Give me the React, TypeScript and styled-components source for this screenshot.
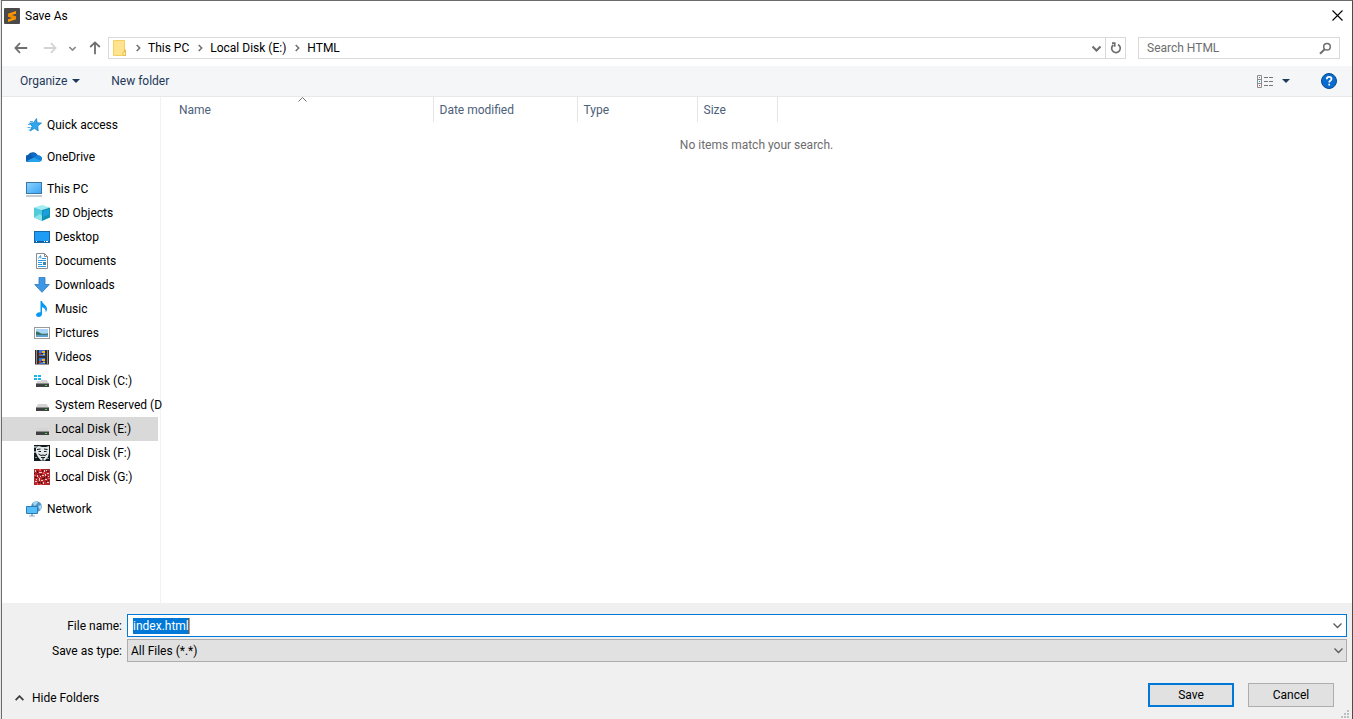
import React, { useEffect, useRef, useState } from "react";
import styled, { createGlobalStyle, css } from "styled-components";

const GlobalStyle = createGlobalStyle`
  *, *::before, *::after { box-sizing: border-box; }
  html, body, #root { height: 100%; }
  body {
    margin: 0;
    background: #e4e6ea;
    color: #000;
    font-family: Roboto, "Segoe UI", "Open Sans", sans-serif;
    font-size: 12px;
    line-height: 16px;
  }
  button, input, select { font: inherit; color: inherit; margin: 0; }
  svg { display: block; flex: none; }
`;

/* ---------- window ---------- */

const Window = styled.div`
  display: flex;
  flex-direction: column;
  min-height: 100%;
  margin-left: 1px;
  background: #fff;
  border: 1px solid #6b6b6b;
  border-right-color: #4c4c4c;
  border-bottom: 0;
`;

const TitleBar = styled.header`
  display: flex;
  align-items: center;
  height: 29px;
  padding: 0 2px;
`;

const Title = styled.h1`
  flex: 1;
  margin: 0 0 0 5px;
  font-size: 12px;
  font-weight: 400;
`;

const IconButton = styled.button<{ $width?: number }>`
  display: flex;
  align-items: center;
  justify-content: center;
  width: ${(p) => p.$width ?? 20}px;
  height: 20px;
  padding: 0;
  border: 0;
  background: transparent;
`;

/* ---------- navigation row ---------- */

const NavRow = styled.nav`
  display: flex;
  align-items: center;
  height: 36px;
  padding: 0 12px 0 9px;
`;

const NavButtons = styled.div`
  display: flex;
  align-items: center;
  justify-content: space-between;
  width: 97px;
  padding-right: 3px;
`;

const AddressBar = styled.div`
  display: flex;
  align-items: center;
  flex: 1;
  height: 22px;
  border: 1px solid #d9d9d9;
`;

const Crumbs = styled.ol`
  display: flex;
  align-items: center;
  flex: 1;
  margin: 0;
  padding: 0 0 0 3px;
  list-style: none;
`;

const Crumb = styled.li`
  display: flex;
  align-items: center;
`;

const CrumbLink = styled.a`
  padding: 0 1px 0 0;
  color: #000;
  text-decoration: none;
`;

const CrumbArrow = styled.span`
  display: flex;
  justify-content: center;
  width: 20px;
`;

const RefreshCell = styled.div`
  display: flex;
  align-items: center;
  align-self: stretch;
  border-left: 1px solid #d9d9d9;
`;

const SearchBox = styled.label`
  display: flex;
  align-items: center;
  width: 202px;
  height: 22px;
  margin-left: 12px;
  padding: 0 7px 0 8px;
  border: 1px solid #d9d9d9;
`;

const SearchInput = styled.input`
  flex: 1;
  min-width: 0;
  padding: 0;
  border: 0;
  outline: 0;
  background: transparent;
  &::placeholder { color: #6d6d6d; opacity: 1; }
`;

/* ---------- toolbar ---------- */

const Toolbar = styled.div`
  display: flex;
  align-items: center;
  height: 31px;
  padding: 0 14px 0 18px;
  background: #f5f6f7;
  border-bottom: 1px solid #e8e8e9;
`;

const ToolbarButton = styled.button`
  display: flex;
  align-items: center;
  gap: 5px;
  height: 20px;
  padding: 0;
  margin-right: 31px;
  border: 0;
  background: transparent;
  color: #1e395b;
`;

const Spacer = styled.div`
  flex: 1;
`;

const ToolbarEnd = styled.div`
  display: flex;
  align-items: center;
`;

const HelpSlot = styled.div`
  margin-left: 23px;
`;

/* ---------- body ---------- */

const Body = styled.div`
  display: flex;
  flex: 1;
`;

const Sidebar = styled.aside`
  flex: none;
  width: 159px;
  padding: 16px 2px 16px 0;
  border-right: 1px solid #f2f2f2;
`;

const Tree = styled.ul`
  display: flex;
  flex-direction: column;
  gap: 8px;
  margin: 0;
  padding: 0;
  list-style: none;
`;

const Branch = styled.ul`
  margin: 0;
  padding: 0;
  list-style: none;
`;

const TreeItem = styled.a<{ $nested?: boolean; $selected?: boolean }>`
  display: flex;
  align-items: center;
  gap: 5px;
  height: 24px;
  padding-left: ${(p) => (p.$nested ? 32 : 24)}px;
  white-space: nowrap;
  color: #000;
  text-decoration: none;
  ${(p) => p.$selected && css`background: #d9d9d9;`}
`;

const FileArea = styled.main`
  flex: 1;
  min-width: 0;
`;

const FileTable = styled.table`
  width: 100%;
  table-layout: fixed;
  border-collapse: collapse;
`;

const HeadCell = styled.th<{ $width?: number; $inset?: number }>`
  position: relative;
  width: ${(p) => (p.$width ? `${p.$width}px` : "auto")};
  height: 25px;
  padding: 0 0 0 ${(p) => p.$inset ?? 6}px;
  border-right: ${(p) => (p.$width ? "1px solid #e5e5e5" : "0")};
  color: #4c607a;
  font-weight: 400;
  text-align: left;
`;

const SortMark = styled.span`
  position: absolute;
  top: 0;
  left: 12px;
  right: 0;
  display: flex;
  justify-content: center;
`;

const EmptyCell = styled.td`
  height: 46px;
  padding: 0;
  color: #6d6d6d;
  text-align: center;
`;

/* ---------- footer ---------- */

const Footer = styled.form`
  display: flex;
  flex-direction: column;
  gap: 2px;
  position: relative;
  padding: 11px 5px 12px 0;
  background: #f0f0f0;
`;

const Field = styled.div`
  display: grid;
  grid-template-columns: 120px 1fr;
  column-gap: 5px;
  align-items: center;
`;

const FieldLabel = styled.label`
  text-align: right;
`;

const NameBox = styled.div`
  display: flex;
  align-items: center;
  justify-content: space-between;
  height: 23px;
  padding-left: 5px;
  border: 1px solid #0078d7;
  background: #fff;
`;

const NameInput = styled.input`
  field-sizing: content;
  height: 16px;
  padding: 0;
  border: 0;
  border-right: 1px solid #ff8728;
  outline: 0;
  background: transparent;
  &::selection { background: #0078d7; color: #fff; }
`;

const SelectWrap = styled.div`
  position: relative;
`;

const TypeSelect = styled.select`
  display: block;
  width: 100%;
  height: 23px;
  padding: 0 20px 0 3px;
  border: 1px solid #adadad;
  border-radius: 0;
  appearance: none;
  background: #e1e1e1;
`;

const SelectArrow = styled.span`
  position: absolute;
  top: 0;
  right: 0;
  bottom: 0;
  display: flex;
  align-items: center;
  justify-content: center;
  width: 18px;
  pointer-events: none;
`;

const Actions = styled.div`
  display: flex;
  align-items: center;
  gap: 14px;
  padding: 19px 13px 0;
`;

const HideFolders = styled.button`
  display: flex;
  align-items: center;
  align-self: flex-end;
  gap: 8px;
  padding: 0 0 1px;
  margin-right: auto;
  border: 0;
  background: transparent;
`;

const PushButton = styled.button<{ $primary?: boolean }>`
  width: 86px;
  height: 24px;
  padding: 0;
  border: ${(p) => (p.$primary ? "2px solid #0078d7" : "1px solid #adadad")};
  background: #e1e1e1;
`;

const Grip = styled.span`
  position: absolute;
  right: 3px;
  bottom: 1px;
`;

/* ---------- small glyphs ---------- */

const ChevronDown = ({ size = 9, color = "#5a5a5a", width = 1.3 }) => (
  <svg width={size} height={size} viewBox="0 0 9 9" fill="none" stroke={color} strokeWidth={width}>
    <path d="M.5 2.5l4 4 4-4" />
  </svg>
);

const Triangle = () => (
  <svg width="8" height="4" viewBox="0 0 8 4"><path d="M0 0h8L4 4z" fill="#1e395b" /></svg>
);

const CrumbChevron = () => (
  <svg width="5" height="8" viewBox="0 0 5 8" fill="none" stroke="#6e6e6e" strokeWidth="1.5">
    <path d="M.7 1l3 3-3 3" />
  </svg>
);

const Arrow = ({ color, turn = 0 }: { color: string; turn?: number }) => (
  <svg width="14" height="14" viewBox="0 0 14 14" fill="none" stroke={color} strokeWidth="1.8">
    <path d="M6 2.2L1.4 7 6 11.8M1.6 7h11.6" transform={`rotate(${turn} 7 7)`} />
  </svg>
);

const AppIcon = () => (
  <svg width="16" height="16" viewBox="0 0 16 16">
    <rect width="16" height="16" rx="1" fill="#4a4a4a" />
    <path d="M12 3v2.7L7.4 7.1 12 8.6v2.7L4 14v-2.7l4.4-1.4L4 8.4V5.7z" fill="#ff9800" />
    <path d="M4 5.700l8 2.900v2.700L4 8.400z" fill="#f08c00" />
  </svg>
);

const FolderIcon = () => (
  <svg width="16" height="16" viewBox="0 0 16 16">
    <path d="M1.500.5h11v9l1 .5v5.500h-12z" fill="#ffe38f" stroke="#f3cf62" />
    <path d="M12.500 9.500l1 .5v5.500h-2.500v-3l1.500-.5z" fill="#fff0b8" stroke="#e8bf4a" />
  </svg>
);

const StarIcon = () => (
  <svg width="16" height="16" viewBox="0 0 16 16">
    <path d="M10.500 1.500l.7 4.300 4.300.2-3.700 3 .4 5-3.700-2.600-4.500 2.600 2.100-4.700L3.500 6l4-.2z" fill="#2ea7ef" stroke="#1580c6" strokeWidth=".7" />
    <path d="M4 4.500h3M2 7.500h3M1.500 10.500h3M2.500 13h2" stroke="#4fb0ea" strokeWidth="1" />
  </svg>
);

const CloudIcon = () => (
  <svg width="16" height="16" viewBox="1 0 15 16" preserveAspectRatio="none">
    <path d="M3.500 13A3.500 3.500 0 0 1 2.800 6 5 5 0 0 1 12 6.500a3 3 0 0 1 3.500 3c0 2-1.500 3-3 3z" fill="#0a5cb0" />
    <path d="M5 5.500A4.600 4.600 0 0 1 12 6.300L8.500 8.800z" fill="#0f6cc8" />
    <path d="M1.800 12l6.500-3.400L12 6.800a3 3 0 0 1 4 2.900 3 3 0 0 1-3 3.300H4z" fill="#28a3ea" />
    <path d="M8.300 8.600L12 6.800a3 3 0 0 1 4 2.900c0 1-.4 1.800-1 2.400z" fill="#1484dc" />
  </svg>
);

const PcIcon = () => (
  <svg width="16" height="16" viewBox="0 0 16 16">
    <defs>
      <linearGradient id="pc" x1="0" y1="0" x2="1" y2="1">
        <stop offset="0" stopColor="#8fd3ff" /><stop offset="1" stopColor="#37a5f4" />
      </linearGradient>
    </defs>
    <rect x=".5" y="1.500" width="15" height="11" fill="url(#pc)" stroke="#3778a8" />
    <path d="M0 15h16" stroke="#8796a6" strokeWidth="1" />
  </svg>
);

const CubeIcon = () => (
  <svg width="16" height="16" viewBox="0 0 16 16">
    <path d="M0 2.500L8 0l8 2.500L8 5z" fill="#a3ecf2" />
    <path d="M0 2.500L8 5v11l-8-3.500z" fill="#4fcbdc" />
    <path d="M16 2.500L8 5v11l8-3.500z" fill="#0f93b0" />
    <path d="M9 6l6-1.800v5.300L9 12z" fill="#1c9fe0" />
    <path d="M0 12.500L6 9l2 2v5z" fill="#8ee3ea" />
  </svg>
);

const DesktopIcon = () => (
  <svg width="16" height="16" viewBox="0 0 16 16">
    <rect x=".5" y="2.500" width="15" height="11" fill="#1f9cf5" stroke="#1569a8" />
    <path d="M1 12.500h14" stroke="#0b5c9e" />
    <path d="M2 12.500h1M10 12.500h1M12 12.500h2" stroke="#fff" />
  </svg>
);

const DocumentIcon = () => (
  <svg width="16" height="16" viewBox="0 0 16 16">
    <path d="M2.500.5h8l3 3v12h-11z" fill="#fff" stroke="#8b8b8b" />
    <path d="M10.500.5v3h3" fill="none" stroke="#8b8b8b" />
    <path d="M4.500 5.500L6.500 2.500l.5 3M8 5.500h4M4 7.500h8M4 9.500h4M4 11.500h4M4 13.500h8" fill="none" stroke="#2c9be0" />
    <path d="M9 9h3v3H9z" fill="#3b87a8" />
  </svg>
);

const DownloadIcon = () => (
  <svg width="16" height="16" viewBox="0 0 16 16">
    <path d="M5 .5h6v7h4.300L8 15.300.7 7.500H5z" fill="#3e97e4" stroke="#2b78bd" strokeWidth=".8" />
  </svg>
);

const MusicIcon = () => (
  <svg width="16" height="16" viewBox="0 0 16 16">
    <path d="M6.500 0H8c.3 3 5 4 5 8 0 1.300-.6 2.600-1.300 3.300C12 8 10 6.800 8 6.300V13c0 1.800-1.500 3-3.300 3C3 16 2 15 2.100 13.700c.2-1.700 2.300-2.900 4.400-2.400z" fill="#0a99f2" />
  </svg>
);

const PictureIcon = () => (
  <svg width="16" height="16" viewBox="0 0 16 16">
    <rect x=".5" y="2.500" width="15" height="11" fill="#fff" stroke="#9a9a9a" />
    <path d="M2 4h12v8H2z" fill="#a9d6f7" />
    <path d="M2 6.500c3 0 4 1.700 6 2.200 2 .4 4-.5 6-.2V10H2z" fill="#35705f" />
    <path d="M2 9.800h12V12H2z" fill="#5f9fcb" />
  </svg>
);

const VideoIcon = () => (
  <svg width="16" height="16" viewBox="0 0 16 16">
    <path d="M1 1h14v14.500H1z" fill="#33312f" />
    <path d="M2.500 1.500v14M13.500 1.500v14" stroke="#e8e8e8" strokeDasharray="1 1" />
    <path d="M5 1h6v6H5zM5 9h6v6H5z" fill="#3d74d6" />
    <path d="M8 2h3v2H8zM8 10h3v2H8z" fill="#f2b32e" />
    <path d="M5 4h2v2H5zM5 12h2v2H5z" fill="#c2382c" />
    <path d="M9 5h2v1H9zM9 13h2v1H9z" fill="#e9d03a" />
    <path d="M7 4h2v1H7zM7 12h2v1H7z" fill="#1d1d3a" />
  </svg>
);

const DriveIcon = ({ system }: { system?: boolean }) => (
  <svg width="16" height="16" viewBox="0 0 16 16">
    <path d="M4 7h8.500l2.500 3.500H2z" fill="#d3d3d3" />
    <path d="M2 10.500h13V14H2z" fill="#414141" />
    <path d="M2 10.500h13" stroke="#8d8d8d" />
    <path d="M11 12.500h2" stroke="#43e04b" />
    {system && (
      <>
        <path d="M0 1h7v7H0z" fill="#fff" />
        <path d="M0 2h3v2H0zM4 2h3v2H4zM0 5h3v2H0zM4 5h3v2H4z" fill="#19b4f0" />
      </>
    )}
  </svg>
);

const MaskIcon = () => (
  <svg width="16" height="16" viewBox="0 0 16 16">
    <path d="M0 0h16v16H0z" fill="#10191e" />
    <path d="M2 2l3-1 3 1h4l3-1v7l-1 4-3 3.500H7L4 12 2 8z" fill="#e3e8e8" />
    <path d="M0 1h3v2H0zM0 6h2v2H0zM1 12h2v1H1zM13 13h2v1h-2z" fill="#8b979b" />
    <path d="M3 4.500l3.500-.5M10 4l3.500.5M4.500 6.500h2.500M10 6.500h2.500M4.500 9l2.500 1.500 2-.5 2 .5L13 9M7 12.500h4M9 13v2.500" fill="none" stroke="#10191e" strokeWidth="1" />
  </svg>
);

const RedArtIcon = () => (
  <svg width="16" height="16" viewBox="0 0 16 16">
    <path d="M0 0h16v16H0z" fill="#b3262c" />
    <path d="M1 1h1v2H1zM5 3h3v1H5zM10 1h1v2h-1zM13 4h2v1h-2zM3 6h1v2H3zM8 6h2v1H8zM11 10h2v1h-2zM5 9h1v3H5zM1 12h2v1H1zM9 13h1v2H9zM13 13h2v1h-2zM7 11h2v1H7zM12 1h1v1h-1zM6 7h1v1H6zM2 10h1v1H2zM11 5h1v2h-1zM14 7h1v1h-1z" fill="#f3cbc6" />
    <path d="M3 2h1v2H3zM8 1h1v2H8zM6 5h2v1H6zM12 7h1v2h-1zM1 8h2v1H1zM4 13h2v1H4zM8 9h2v1H8zM12 12h1v1h-1zM4 5h1v1H4zM13 2h2v1h-2zM10 8h1v2h-1zM7 13h1v2H7zM0 4h1v1H0zM14 11h1v1h-1z" fill="#4c1216" />
    <path d="M5 0h2v2H5zM10 4h1v1h-1zM0 6h2v1H0zM14 9h2v1h-2zM3 14h1v2H3zM6 15h2v1H6zM4 8h1v1H4zM9 3h1v2H9z" fill="#ef5358" />
  </svg>
);

const NetworkIcon = () => (
  <svg width="16" height="16" viewBox="0 0 16 16">
    <circle cx="10.500" cy="5.500" r="5.300" fill="#4e93c4" />
    <path d="M7 2c2-2 4-1.500 5-.8L10 4 8 5zM12 5l3-1c1 2 .5 4-1 5.500z" fill="#a9d7ee" />
    <path d="M.5 5.500h11v7H.5z" fill="#55bdf8" stroke="#2b7cb6" />
    <path d="M5 13h2v1.500H5zM3 14.500h6v1H3z" fill="#8fb1c9" />
  </svg>
);

/* ---------- data ---------- */

type Place = { name: string; icon: React.ReactNode; children?: Place[] };

const places: Place[] = [
  { name: "Quick access", icon: <StarIcon /> },
  { name: "OneDrive", icon: <CloudIcon /> },
  {
    name: "This PC",
    icon: <PcIcon />,
    children: [
      { name: "3D Objects", icon: <CubeIcon /> },
      { name: "Desktop", icon: <DesktopIcon /> },
      { name: "Documents", icon: <DocumentIcon /> },
      { name: "Downloads", icon: <DownloadIcon /> },
      { name: "Music", icon: <MusicIcon /> },
      { name: "Pictures", icon: <PictureIcon /> },
      { name: "Videos", icon: <VideoIcon /> },
      { name: "Local Disk (C:)", icon: <DriveIcon system /> },
      { name: "System Reserved (D", icon: <DriveIcon /> },
      { name: "Local Disk (E:)", icon: <DriveIcon /> },
      { name: "Local Disk (F:)", icon: <MaskIcon /> },
      { name: "Local Disk (G:)", icon: <RedArtIcon /> },
    ],
  },
  { name: "Network", icon: <NetworkIcon /> },
];

const crumbs = ["This PC", "Local Disk (E:)", "HTML"];

export default function App() {
  const nameRef = useRef<HTMLInputElement>(null);
  const [fileName, setFileName] = useState("index.html");
  const [selected, setSelected] = useState("Local Disk (E:)");

  useEffect(() => {
    nameRef.current?.focus();
    nameRef.current?.select();
  }, []);

  const renderPlace = (place: Place, nested = false) => (
    <li key={place.name}>
      <TreeItem
        href="#"
        $nested={nested}
        $selected={place.name === selected}
        onClick={(e) => { e.preventDefault(); setSelected(place.name); }}
      >
        {place.icon}
        {place.name}
      </TreeItem>
      {place.children && <Branch>{place.children.map((c) => renderPlace(c, true))}</Branch>}
    </li>
  );

  return (
    <>
      <GlobalStyle />
      <Window>
        <TitleBar>
          <AppIcon />
          <Title>Save As</Title>
          <IconButton type="button" aria-label="Close" $width={26}>
            <svg width="11" height="11" viewBox="0 0 11 11" stroke="#000" strokeWidth="1.100">
              <path d="M.5.5l10 10M10.500.5l-10 10" />
            </svg>
          </IconButton>
        </TitleBar>

        <NavRow aria-label="Location">
          <NavButtons>
            <IconButton type="button" aria-label="Back"><Arrow color="#6e6e6e" /></IconButton>
            <IconButton type="button" aria-label="Forward"><Arrow color="#d4d4d4" turn={180} /></IconButton>
            <IconButton type="button" aria-label="Recent locations" $width={8}>
              <ChevronDown size={7} color="#8a8a8a" width={2} />
            </IconButton>
            <IconButton type="button" aria-label="Up"><Arrow color="#6e6e6e" turn={90} /></IconButton>
          </NavButtons>
          <AddressBar>
            <Crumbs>
              <Crumb><FolderIcon /></Crumb>
              {crumbs.map((c) => (
                <Crumb key={c}>
                  <CrumbArrow><CrumbChevron /></CrumbArrow>
                  <CrumbLink href="#">{c}</CrumbLink>
                </Crumb>
              ))}
            </Crumbs>
            <IconButton type="button" aria-label="Previous locations" $width={18}>
              <ChevronDown color="#6e6e6e" width={2} />
            </IconButton>
            <RefreshCell>
              <IconButton type="button" aria-label="Refresh" $width={19}>
                <svg width="12" height="12" viewBox="0 0 12 12" fill="none" stroke="#6e6e6e" strokeWidth="1.700">
                  <path d="M8 2.500A4.300 4.300 0 1 1 3.200 3M2 1.200h2.700v3.500" />
                </svg>
              </IconButton>
            </RefreshCell>
          </AddressBar>
          <SearchBox>
            <SearchInput type="text" placeholder="Search HTML" aria-label="Search HTML" />
            <svg width="13" height="13" viewBox="0 0 13 13" fill="none" stroke="#6e6e6e" strokeWidth="1.500">
              <circle cx="8" cy="4.700" r="3.300" />
              <path d="M5.700 7.200L1 11.800" strokeWidth="1.900" />
            </svg>
          </SearchBox>
        </NavRow>

        <Toolbar>
          <ToolbarButton type="button">Organize <Triangle /></ToolbarButton>
          <ToolbarButton type="button">New folder</ToolbarButton>
          <Spacer />
          <ToolbarEnd>
            <IconButton type="button" aria-label="Change your view">
              <svg width="16" height="13" viewBox="0 0 16 13" fill="none" stroke="#8c8c8c">
                <path d="M.5.500h4v12h-4zM.5 4.500h4M.5 8.500h4" />
                <path d="M7 2.500h4M12 2.500h4M7 6.500h4M12 6.500h4M7 10.500h4M12 10.500h4" stroke="#777" />
                <path d="M2 2.500h1" stroke="#777" /><path d="M2 6.500h1" stroke="#1a8cf0" /><path d="M2 10.500h1" stroke="#e03a3a" />
              </svg>
            </IconButton>
            <IconButton type="button" aria-label="More view options" $width={22}><Triangle /></IconButton>
            <HelpSlot>
              <IconButton type="button" aria-label="Help" $width={18}>
                <svg width="16" height="16" viewBox="0 0 16 16">
                  <circle cx="8" cy="8" r="7.500" fill="#0b6ccf" stroke="#07498f" />
                  <path d="M5.800 6.200c0-3.200 4.700-2.900 4.700-.3C10.500 7.500 8.200 7.600 8.200 9.600M8.200 10.800v1.800" fill="none" stroke="#fff" strokeWidth="1.700" />
                </svg>
              </IconButton>
            </HelpSlot>
          </ToolbarEnd>
        </Toolbar>

        <Body>
          <Sidebar>
            <Tree>{places.map((p) => renderPlace(p))}</Tree>
          </Sidebar>
          <FileArea>
            <FileTable>
              <thead>
                <tr>
                  <HeadCell scope="col" $width={272} $inset={18}>
                    Name
                    <SortMark>
                      <svg width="9" height="5" viewBox="0 0 9 5" fill="none" stroke="#6e6e6e">
                        <path d="M.5 4.500l4-4 4 4" />
                      </svg>
                    </SortMark>
                  </HeadCell>
                  <HeadCell scope="col" $width={144}>Date modified</HeadCell>
                  <HeadCell scope="col" $width={120}>Type</HeadCell>
                  <HeadCell scope="col" $width={80}>Size</HeadCell>
                  <HeadCell as="td" />
                </tr>
              </thead>
              <tbody>
                <tr><EmptyCell colSpan={5}>No items match your search.</EmptyCell></tr>
              </tbody>
            </FileTable>
          </FileArea>
        </Body>

        <Footer onSubmit={(e) => e.preventDefault()}>
          <Field>
            <FieldLabel htmlFor="file-name">File name:</FieldLabel>
            <NameBox>
              <NameInput
                id="file-name"
                type="text"
                ref={nameRef}
                value={fileName}
                onChange={(e) => setFileName(e.target.value)}
              />
              <IconButton type="button" aria-label="Recent names" $width={18}><ChevronDown /></IconButton>
            </NameBox>
          </Field>
          <Field>
            <FieldLabel htmlFor="file-type">Save as type:</FieldLabel>
            <SelectWrap>
              <TypeSelect id="file-type" defaultValue="all">
                <option value="all">All Files (*.*)</option>
              </TypeSelect>
              <SelectArrow><ChevronDown /></SelectArrow>
            </SelectWrap>
          </Field>
          <Actions>
            <HideFolders type="button">
              <svg width="9" height="6" viewBox="0 0 9 6" fill="none" stroke="#3c3c3c" strokeWidth="1.800">
                <path d="M.6 5.200l3.900-4 3.900 4" />
              </svg>
              Hide Folders
            </HideFolders>
            <PushButton type="submit" $primary>Save</PushButton>
            <PushButton type="button">Cancel</PushButton>
          </Actions>
          <Grip>
            <svg width="8" height="8" viewBox="0 0 8 8" fill="#bfbfbf">
              <path d="M6 0h2v2H6zM6 3h2v2H6zM3 3h2v2H3zM6 6h2v2H6zM3 6h2v2H3zM0 6h2v2H0z" />
            </svg>
          </Grip>
        </Footer>
      </Window>
    </>
  );
}
